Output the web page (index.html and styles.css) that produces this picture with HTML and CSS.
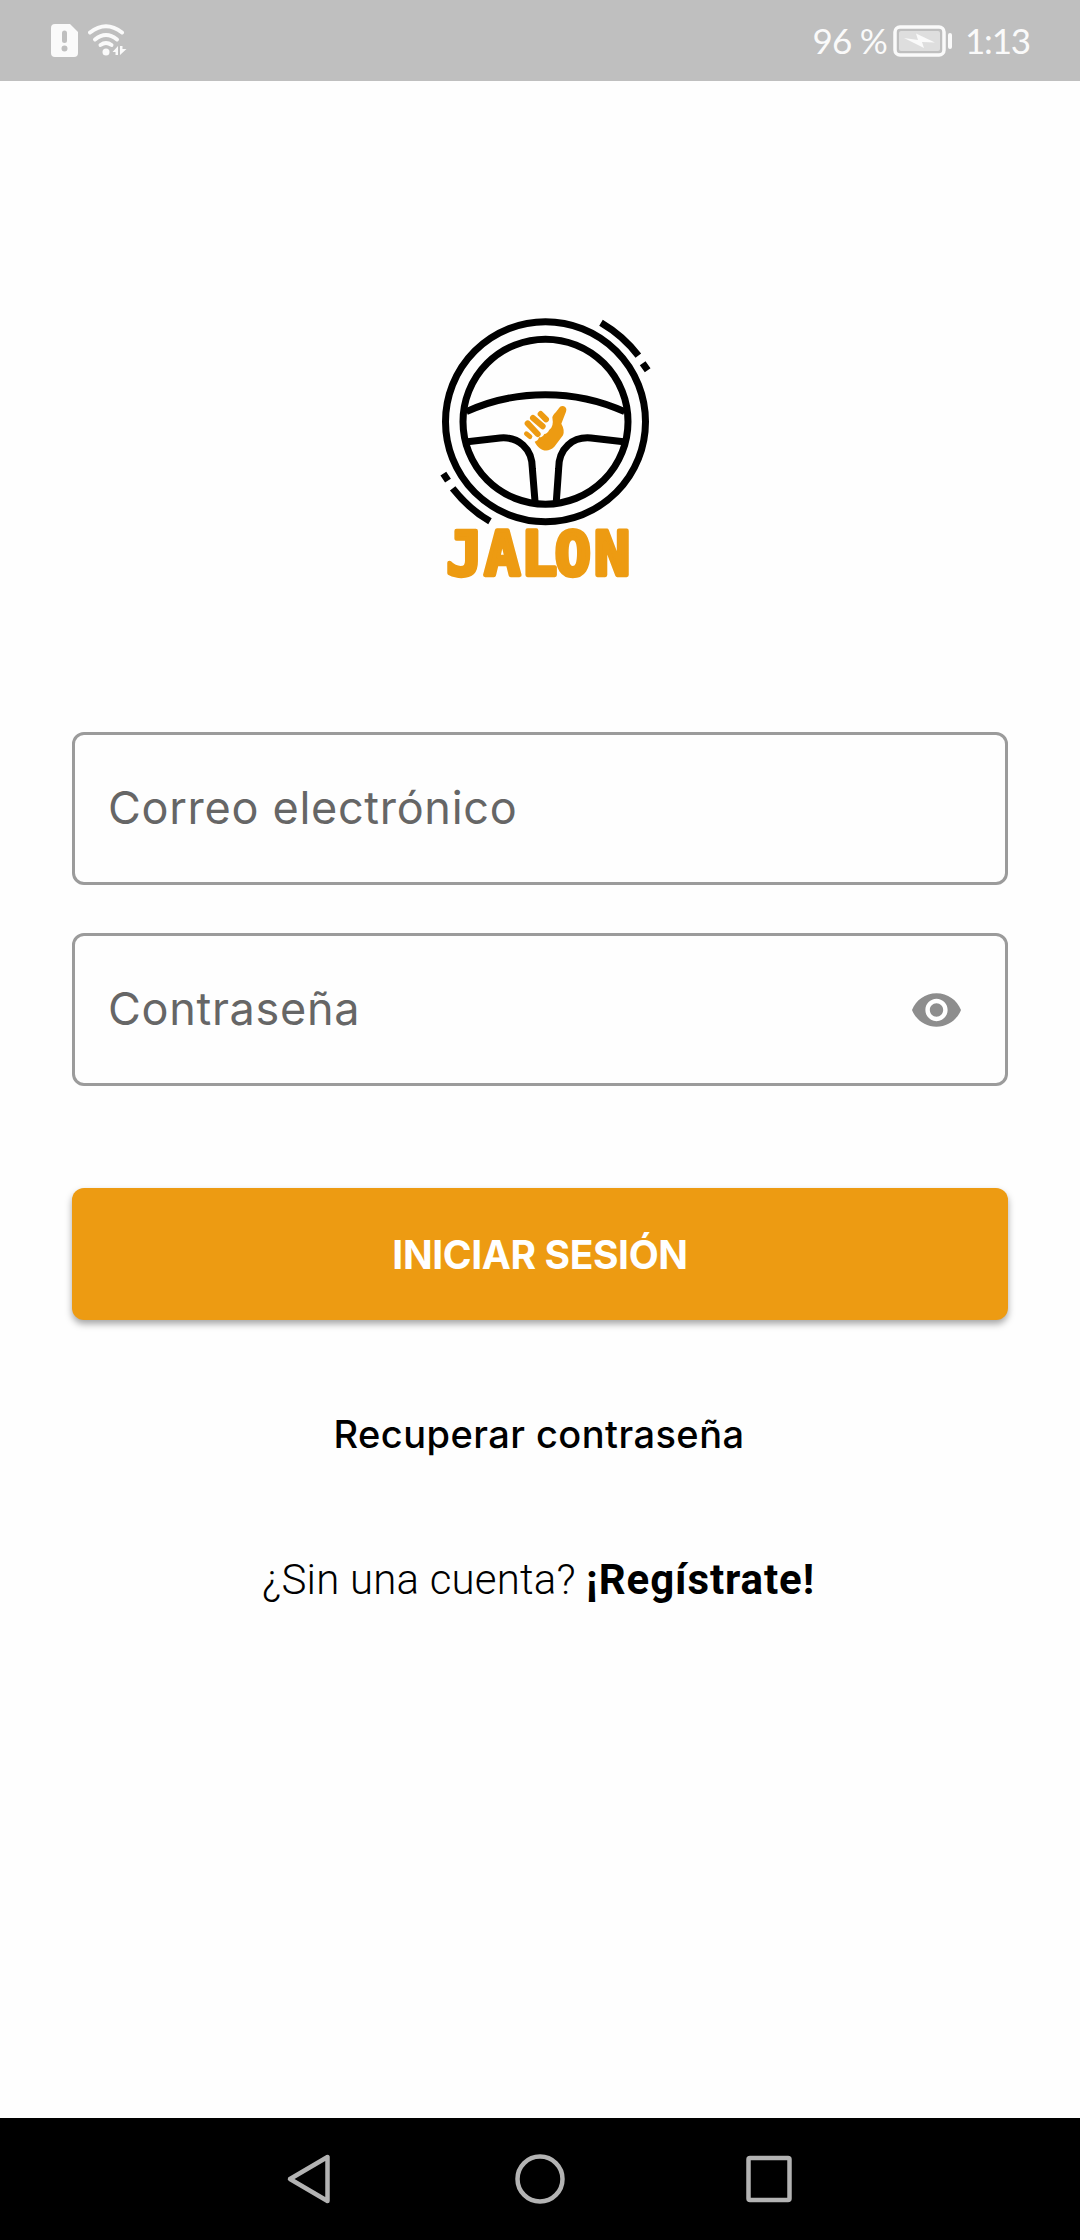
FILE: index.html
```html
<!DOCTYPE html>
<html lang="es">
<head>
<meta charset="utf-8">
<title>Jalon</title>
<link rel="stylesheet" href="styles.css">
</head>
<body>
<div class="screen">
  <header class="status">
    <svg class="sim" viewBox="0 0 27 33"><path fill-rule="evenodd" d="M4 0H19L27 8V29Q27 33 23 33H4Q0 33 0 29V4Q0 0 4 0ZM11 9V16.500A2.500 2.500 0 0 0 16 16.500V9A2.500 2.500 0 0 0 11 9ZM13.500 21.500A3 3 0 1 0 13.500 27.500A3 3 0 1 0 13.500 21.500Z"/></svg>
    <svg class="wifi" viewBox="0 0 40 33"><g fill="none" stroke="#fafafa" stroke-width="4" stroke-linecap="round"><path d="M2 8.500Q18 -4 34 8.500"/><path d="M7 15.500Q18 6.500 29 15.500"/><path d="M12.500 21Q18 17 23.500 21"/></g><circle cx="18" cy="28" r="3.500"/><path d="M30 22V31H27.500V28H24.500ZM32 31V22H34.500V25H38.500Z"/></svg>
    <span class="percent">96 %</span>
    <svg class="battery" viewBox="0 0 60 32"><rect x="6" y="6" width="41" height="20" rx="2" fill="#dedede"/><rect x="2" y="2" width="49" height="28" rx="5" fill="none" stroke="#fafafa" stroke-width="3.500"/><path d="M11 13L25 15 23 8.500 42 17.500 29 17 31 23Z"/><rect x="55" y="8" width="4" height="16" rx="2"/></svg>
    <span class="clock">1:13</span>
  </header>

  <main class="login">
    <svg class="logo" viewBox="0 0 750 900">
      <g fill="none" stroke="#000" stroke-width="21">
        <circle cx="376.500" cy="365" r="300"/>
        <circle cx="376.500" cy="365" r="247.500"/>
        <path d="M139 335Q250 284 376 284T614 335"/>
        <path d="M142 425L240 414C295 409 337 445 337 505L345 604"/>
        <path d="M611 425L513 414C458 409 416 445 416 505L409 604"/>
        <path d="M543 68Q611 108 655 167M668 190L683 211"/>
        <path d="M210 664Q149 629 98 565M84 542L70 521"/>
      </g>
      <g fill="#ed9b12">
        <path d="M344 425Q354 423 357 412Q367 413 373 402Q381 402 388 389Q402 381 397 352C400 342 413 332 417 324Q423 315 432 319Q442 324 438 335L424 371Q435 390 429 406L403 440C382 461 357 451 344 425Z"/>
        <g stroke="#ed9b12" stroke-linecap="round" stroke-width="18"><path d="M362 342L378 358M339 354L368 379M323 370L353 402"/><path d="M319 401L330 410" stroke-width="14"/></g>
      </g>
      <text class="brand" y="826" x="79 193 303 404 522">JALON</text>
    </svg>

    <div class="field"><span>Correo electrónico</span></div>
    <div class="field second"><span>Contraseña</span>
      <svg class="eye" viewBox="1 4.500 22 15"><path d="M12 4.500C7 4.500 2.730 7.610 1 12c1.730 4.390 6 7.500 11 7.500s9.270-3.110 11-7.500c-1.730-4.390-6-7.500-11-7.500zM12 17c-2.760 0-5-2.240-5-5s2.240-5 5-5 5 2.240 5 5-2.240 5-5 5zm0-8c-1.660 0-3 1.340-3 3s1.340 3 3 3 3-1.340 3-3-1.340-3-3-3z"/></svg>
    </div>
    <button class="submit">INICIAR SESIÓN</button>
    <a class="recover">Recuperar contraseña</a>
    <p class="signup"><span class="ask">¿Sin una cuenta?</span><b>¡Regístrate!</b></p>
  </main>

  <nav class="nav">
    <svg viewBox="0 0 56 56"><path d="M44.500 6V50L7 28Z"/></svg>
    <svg viewBox="0 0 56 56"><circle cx="28" cy="28" r="22.500"/></svg>
    <svg viewBox="0 0 56 56"><rect x="7.500" y="7" width="41" height="42" rx="1.500"/></svg>
  </nav>
</div>
</body>
</html>
```

FILE: styles.css
```css
* { box-sizing: border-box; }
body { margin: 0; background: #fefefe; font-family: Roboto, sans-serif; }
.screen { width: 1080px; height: 2240px; display: flex; flex-direction: column; }

.status { height: 81px; padding: 0 51px; display: flex; align-items: center; background: #bfbfbf; color: #fafafa; fill: #fafafa; font: 400 35px/81px Lato, sans-serif; letter-spacing: -0.8px; white-space: nowrap; }
.sim { width: 27px; height: 33px; }
.wifi { width: 40px; height: 33px; margin-left: 10px; }
.percent { margin-left: auto; }
.battery { width: 60px; height: 32px; margin-left: 6px; }
.clock { width: 64px; margin-left: 12px; letter-spacing: -1.2px; }

.login { flex: 1; padding: 0 72px; display: flex; flex-direction: column; }
.logo { width: 250px; height: 300px; margin: 219px 0 132px 348px; }
.brand { font: 700 180px "DejaVu Sans Mono", monospace; fill: #ed9b12; stroke: #ed9b12; stroke-width: 13px; stroke-linejoin: round; }

.field { height: 153px; padding: 0 44px 3px 33px; display: flex; align-items: center; justify-content: space-between; border: 3px solid #9b9b9b; border-radius: 12px; color: #666; font: 400 45px Inter, sans-serif; letter-spacing: 0.7px; }
.second { margin-top: 48px; }
.eye { width: 49px; height: 34px; margin-top: 3px; fill: #8d8d8d; }

.submit { height: 132px; margin-top: 102px; padding: 0; border: 0; border-radius: 12px; background: #ed9b12; color: #fff; box-shadow: 0 4px 7px rgba(0, 0, 0, .35); font: 700 39px Inter, sans-serif; letter-spacing: -0.4px; }
.recover { margin: 91px 2px 0 0; align-self: center; font: 500 38px/46px Inter, sans-serif; letter-spacing: 0.45px; color: #000; white-space: nowrap; }
.signup { margin: 98px 0 0 190px; display: flex; font-size: 42px; line-height: 50px; color: #000; white-space: nowrap; }
.ask { width: 324px; font-weight: 300; letter-spacing: 0.2px; }
.signup b { letter-spacing: 0.9px; }

.nav { height: 122px; display: flex; justify-content: center; align-items: center; gap: 173px; background: #000; }
.nav svg { width: 56px; height: 56px; fill: none; stroke: #b3b3b3; stroke-width: 4.500; stroke-linejoin: round; }
```
